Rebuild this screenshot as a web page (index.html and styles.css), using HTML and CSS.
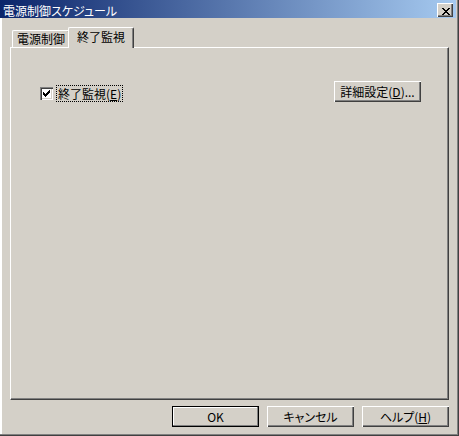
FILE: index.html
```html
<!DOCTYPE html>
<html lang="ja">
<head>
<meta charset="utf-8">
<title>電源制御スケジュール</title>
<link rel="stylesheet" href="styles.css">
</head>
<body>
<div class="window">
  <div class="titlebar">
    <span class="title">電源制御スケジュール</span>
    <span class="close" aria-label="閉じる">
      <svg width="8" height="7" viewBox="0 0 8 7" shape-rendering="crispEdges"><path fill="#000" d="M0 0h2v1H0zM6 0h2v1H6zM1 1h2v1H1zM5 1h2v1H5zM2 2h4v1H2zM3 3h2v1H3zM2 4h4v1H2zM1 5h2v1H1zM5 5h2v1H5zM0 6h2v1H0zM6 6h2v1H6z"/></svg>
    </span>
  </div>
  <div class="tabs">
    <div class="tab">電源制御</div>
    <div class="tab active">終了監視</div>
  </div>
  <div class="panel">
    <div class="row">
      <div class="checkgroup">
        <span class="check">
          <svg width="7" height="7" viewBox="0 0 7 7" shape-rendering="crispEdges"><path fill="#000" d="M6 0h1v1H6zM5 1h2v1H5zM0 2h1v1H0zM4 2h3v1H4zM0 3h2v1H0zM3 3h3v1H3zM0 4h5v1H0zM1 5h3v1H1zM2 6h1v1H2z"/></svg>
        </span>
        <span class="label">終了監視(<u>E</u>)</span>
      </div>
      <span class="spacer"></span>
      <span class="btn detail">詳細設定(<u>D</u>)...</span>
    </div>
  </div>
  <div class="buttons">
    <span class="btn default">OK</span>
    <span class="btn">キャンセル</span>
    <span class="btn">ヘルプ(<u>H</u>)</span>
  </div>
</div>
</body>
</html>
```

FILE: styles.css
```css
html, body {
  margin: 0;
  padding: 0;
  background: #d4d0c8;
}

body {
  font-family: "Noto Sans CJK JP", "Liberation Sans", sans-serif;
  font-size: 12px;
  color: #000;
  font-feature-settings: "palt";
}

.window {
  width: 459px;
  height: 436px;
  box-sizing: border-box;
  padding: 0 3px 3px 0;
  background: #d4d0c8;
  display: flex;
  flex-direction: column;
  box-shadow: inset -1px -1px #404040, inset -2px -2px #808080, inset 2px 0 #ffffff;
}

.titlebar {
  height: 18px;
  flex: none;
  display: flex;
  align-items: flex-start;
  padding-left: 3px;
  background: linear-gradient(to right, #0a246a, #a6caf0);
  color: #fff;
}

.title {
  flex: 1;
  line-height: 12px;
  margin-top: 5px;
  white-space: nowrap;
}

.close {
  width: 16px;
  height: 14px;
  box-sizing: border-box;
  margin: 3px 3px 0 0;
  padding: 5px 0 0 5px;
  display: flex;
  align-items: flex-start;
  background: #d4d0c8;
  box-shadow: inset 1px 1px #ffffff, inset -1px -1px #404040, inset -2px -2px #808080;
}

.close svg { display: block; }

.tabs {
  flex: none;
  height: 30px;
  margin-bottom: -1px;
  padding-left: 12px;
  display: flex;
  align-items: flex-end;
  position: relative;
  z-index: 1;
}

.tab {
  box-sizing: border-box;
  width: 58px;
  height: 17px;
  margin-bottom: 1px;
  padding-top: 2px;
  line-height: 12px;
  text-align: center;
  white-space: nowrap;
  background: #d4d0c8;
  border-left: 1px solid #ffffff;
  border-top: 1px solid #ffffff;
  border-right: 1px solid #404040;
  border-radius: 2px 2px 0 0;
  box-shadow: inset -1px 0 #808080;
}

.tab.active {
  width: 66px;
  height: 21px;
  margin-left: -2px;
  margin-bottom: 0;
  padding-top: 3px;
  position: relative;
  z-index: 2;
}

.panel {
  flex: none;
  margin-left: 10px;
  width: 439px;
  height: 353px;
  box-sizing: border-box;
  border-left: 1px solid #ffffff;
  border-top: 1px solid #ffffff;
  border-right: 1px solid #404040;
  border-bottom: 1px solid #404040;
  box-shadow: inset -1px -1px #808080;
  padding: 33px 0 0 29px;
}

.row {
  display: flex;
  align-items: flex-start;
}

.checkgroup {
  display: flex;
  align-items: flex-start;
  margin-top: 4px;
}

.check {
  width: 13px;
  height: 13px;
  box-sizing: border-box;
  margin-top: 2px;
  padding: 3px 0 0 3px;
  background: #ffffff;
  box-shadow: inset 1px 1px #808080, inset 2px 2px #404040, inset -1px -1px #ffffff, inset -2px -2px #d4d0c8;
}

.check svg { display: block; }

.label {
  margin-left: 3px;
  padding: 1px 1px 1px 1px;
  line-height: 13px;
  border: 1px dotted #000;
  white-space: nowrap;
}

.spacer { flex: 1; }

.btn {
  display: flex;
  align-items: center;
  justify-content: center;
  width: 87px;
  height: 21px;
  box-sizing: border-box;
  line-height: 12px;
  white-space: nowrap;
  background: #d4d0c8;
  box-shadow: inset 1px 1px #ffffff, inset -1px -1px #404040, inset -2px -2px #808080;
}

.btn.detail {
  margin-right: 27px;
}

.btn.default {
  box-shadow: inset 0 0 0 1px #000000, inset -2px -2px #808080, inset 2px 2px #ffffff;
}

.buttons {
  flex: none;
  display: flex;
  justify-content: flex-end;
  gap: 8px;
  margin-top: 6px;
  padding-right: 7px;
}

u {
  text-decoration: underline;
  text-underline-offset: 1px;
}
```
